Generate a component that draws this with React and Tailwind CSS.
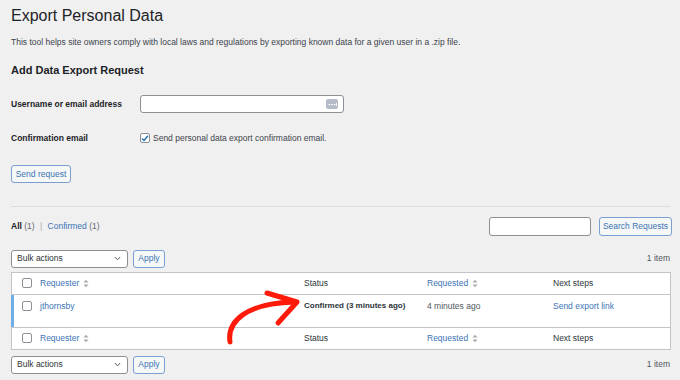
import React from "react";

const font = { fontFamily: '"Liberation Sans", Arial, sans-serif' };

function SortIcon() {
  return (
    <svg width="6" height="9" viewBox="0 0 6 9" className="ml-[4px] inline-block">
      <path d="M0.5 3.5 L3 0.8 L5.5 3.5 Z" fill="#a7aaad" />
      <path d="M0.5 5.5 L3 8.2 L5.5 5.5 Z" fill="#a7aaad" />
    </svg>
  );
}

function Checkbox() {
  return <span className="inline-block w-[10px] h-[10px] rounded-[2px] border border-[#8c8f94] bg-white" />;
}

function BulkBar({ top }) {
  return (
    <div className={"flex items-center h-[18px] " + top}>
      <div className="flex items-center justify-between w-[117px] h-[18px] rounded-[3px] border border-[#8c8f94] bg-white pl-[5px] pr-[6px] text-[8.5px] text-[#2c3338]">
        <span>Bulk actions</span>
        <svg width="7" height="5" viewBox="0 0 7 5">
          <path d="M0.8 1 L3.5 3.8 L6.2 1" fill="none" stroke="#50575e" strokeWidth="1" />
        </svg>
      </div>
      <button className="ml-[5px] h-[18px] w-[32px] rounded-[3px] border border-[#7a9fd0] bg-[#f6f7f7] text-[8.5px] text-[#3b74b5]">
        Apply
      </button>
      <span className="ml-auto mr-[2px] text-[8.5px] text-[#50575e]">1 item</span>
    </div>
  );
}

function HeadRow({ border }) {
  return (
    <div className={"flex items-center h-[22px] text-[8.5px] text-[#2c3338] " + border}>
      <div className="w-[28px] pl-[10px] flex items-center"><Checkbox /></div>
      <div className="w-[264px] text-[#3b74b5] flex items-center">Requester<SortIcon /></div>
      <div className="w-[123px]">Status</div>
      <div className="w-[126px] text-[#3b74b5] flex items-center">Requested<SortIcon /></div>
      <div>Next steps</div>
    </div>
  );
}

export default function App() {
  return (
    <div className="relative w-[680px] h-[380px] overflow-hidden bg-[#f0f0f1] text-[#1d2327]" style={font}>
      <div className="pl-[11px] pr-[8px]">
        <h1 className="pt-[6px] text-[16px] leading-[20px] font-normal text-[#1d2327]">Export Personal Data</h1>
        <p className="mt-[10px] text-[8.5px] leading-[12px] text-[#3c434a]">
          This tool helps site owners comply with local laws and regulations by exporting known data for a given user in a .zip file.
        </p>
        <h2 className="mt-[15px] text-[11px] leading-[14px] font-bold">Add Data Export Request</h2>

        <div className="mt-[18px] flex items-center h-[18px]">
          <label className="w-[129px] text-[8.5px] font-bold">Username or email address</label>
          <div className="flex items-center justify-end w-[204px] h-[18px] rounded-[3px] border border-[#8c8f94] bg-white pr-[5px]">
            <span className="flex items-center justify-center w-[12px] h-[10px] rounded-[2px] bg-[#b5bcc8]">
              <svg width="9" height="3" viewBox="0 0 9 3">
                <rect x="0.5" y="1" width="1.6" height="1.2" fill="#fff" />
                <rect x="3.2" y="1" width="1.6" height="1.2" fill="#fff" />
                <rect x="5.9" y="1" width="1.6" height="1.2" fill="#fff" />
                <rect x="8.2" y="0" width="0.8" height="3" fill="#fff" />
              </svg>
            </span>
          </div>
        </div>

        <div className="mt-[18px] flex items-center h-[14px]">
          <label className="w-[129px] text-[8.5px] font-bold">Confirmation email</label>
          <span className="flex items-center justify-center w-[10px] h-[10px] rounded-[2px] border border-[#8c8f94] bg-white">
            <svg width="8" height="7" viewBox="0 0 8 7">
              <path d="M1 3.5 L3 5.5 L7 0.8" fill="none" stroke="#2271b1" strokeWidth="1.4" />
            </svg>
          </span>
          <span className="ml-[3px] text-[8.5px] text-[#3c434a]">Send personal data export confirmation email.</span>
        </div>

        <button className="mt-[20px] h-[18px] w-[60px] rounded-[3px] border border-[#7a9fd0] bg-[#f6f7f7] text-[8.5px] text-[#3b74b5]">
          Send request
        </button>

        <div className="mt-[22px] mr-[2px] border-t border-[#dcdcde]" />

        <div className="mt-[10px] flex items-center h-[19px]">
          <div className="text-[8.5px] text-[#646970]">
            <span className="text-[#1d2327] font-bold">All</span> (1) <span className="mx-[3px] text-[#a7aaad]">|</span>{" "}
            <span className="text-[#3b74b5]">Confirmed</span> (1)
          </div>
          <div className="ml-auto w-[102px] h-[19px] rounded-[3px] border border-[#8c8f94] bg-white" />
          <button className="ml-[8px] h-[19px] w-[73px] rounded-[3px] border border-[#7a9fd0] bg-[#f6f7f7] text-[8.5px] text-[#3b74b5]">
            Search Requests
          </button>
        </div>

        <BulkBar top="mt-[14px]" />

        <div className="mt-[4px] mr-[1px] border border-[#c3c4c7] bg-white">
          <HeadRow border="border-b border-[#c3c4c7]" />
          <div className="flex h-[32px] text-[8.5px] border-l-[3px] border-[#72aee6] -ml-[1px]">
            <div className="w-[26px] pl-[8px] pt-[6px]"><Checkbox /></div>
            <div className="w-[264px] pt-[5px] text-[#3b74b5]">jthornsby</div>
            <div className="w-[123px] pt-[5px] font-bold text-[8px] text-[#2c3338]">Confirmed (3 minutes ago)</div>
            <div className="w-[126px] pt-[5px] text-[#50575e]">4 minutes ago</div>
            <div className="pt-[5px] text-[#3b74b5]">Send export link</div>
          </div>
          <HeadRow border="border-t border-[#c3c4c7]" />
        </div>

        <BulkBar top="mt-[6px]" />
      </div>

      <svg className="absolute left-0 top-0 pointer-events-none" width="680" height="380" viewBox="0 0 680 380">
        <path d="M230 342 C 227 322, 245 303, 295 302" fill="none" stroke="#ff1a0a" strokeWidth="5" strokeLinecap="round" />
        <path d="M267 293 L 297 302 L 278 323" fill="none" stroke="#ff1a0a" strokeWidth="5" strokeLinecap="round" strokeLinejoin="round" />
      </svg>
    </div>
  );
}
